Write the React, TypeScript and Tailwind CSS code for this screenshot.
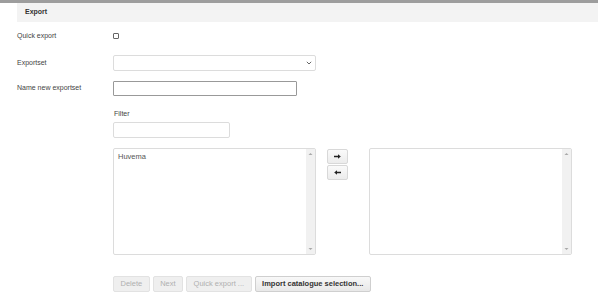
import React from "react";

const font = { fontFamily: '"Liberation Sans", Arial, sans-serif' };

function ScrollArrow({ up }: { up: boolean }) {
  return (
    <svg width="5" height="4" viewBox="0 0 5 4">
      {up ? <path d="M0.5 3 L2.5 1 L4.5 3 Z" fill="#a8a8a8" /> : <path d="M0.5 1 L2.5 3 L4.5 1 Z" fill="#a8a8a8" />}
    </svg>
  );
}

function ListBox({ items }: { items: string[] }) {
  return (
    <div className="flex h-[107px] w-[203px] rounded-[2px] border border-[#dcdcdc] bg-white">
      <div className="flex-1 px-[4px] pt-[3px] text-[7.5px] leading-[9px] text-[#555]">
        {items.map((i) => (
          <div key={i}>{i}</div>
        ))}
      </div>
      <div className="flex w-[9px] flex-col items-center justify-between bg-[#f1f1f1] py-[3px]">
        <ScrollArrow up />
        <ScrollArrow up={false} />
      </div>
    </div>
  );
}

function ArrowBtn({ dir }: { dir: "r" | "l" }) {
  return (
    <div className="flex h-[15px] w-[21px] items-center justify-center rounded-[2px] border border-[#d8d8d8] bg-gradient-to-b from-[#fafafa] to-[#ececec]">
      <svg width="7" height="5" viewBox="0 0 7 5">
        {dir === "r" ? (
          <path d="M0 1.7 H4 V0.2 L6.8 2.5 L4 4.8 V3.3 H0 Z" fill="#222" />
        ) : (
          <path d="M7 1.7 H3 V0.2 L0.2 2.5 L3 4.8 V3.3 H7 Z" fill="#222" />
        )}
      </svg>
    </div>
  );
}

function Btn({ label, disabled }: { label: string; disabled?: boolean }) {
  return (
    <div
      className={
        "flex h-[16px] items-center rounded-[2px] border px-[6.5px] text-[7.5px] " +
        (disabled
          ? "border-[#e2e2e2] bg-[#efefef] text-[#b0b0b0]"
          : "border-[#cfcfcf] bg-gradient-to-b from-[#f8f8f8] to-[#e8e8e8] font-bold text-[#333]")
      }
    >
      {label}
    </div>
  );
}

export default function App() {
  return (
    <div className="relative h-[298px] w-[598px] overflow-hidden bg-white" style={font}>
      <div className="h-[3px] w-full bg-[#9d9d9d]" />
      <div className="ml-[17px] flex h-[19px] items-center bg-[#f3f3f3] pl-[8px] text-[7px] font-bold text-[#333]">
        Export
      </div>
      <div className="text-[7px] text-[#444]">
        <div className="mt-[10px] flex h-[8px] items-center">
          <div className="w-[113px] pl-[17px]">Quick export</div>
          <div className="h-[6px] w-[6px] rounded-[1px] border border-[#666] bg-white" />
        </div>
        <div className="mt-[15px] flex h-[16px] items-center">
          <div className="w-[113px] pl-[17px]">Exportset</div>
          <div className="flex h-[16px] w-[203px] items-center justify-end rounded-[2px] border border-[#dcdcdc] bg-white pr-[3px]">
            <svg width="6" height="4" viewBox="0 0 6 4">
              <path d="M0.8 0.8 L3 3 L5.2 0.8" stroke="#666" strokeWidth="1" fill="none" />
            </svg>
          </div>
        </div>
        <div className="mt-[10px] flex h-[15px] items-center">
          <div className="w-[113px] pl-[17px]">Name new exportset</div>
          <div className="h-[15px] w-[184px] rounded-[1px] border border-[#999] bg-white" />
        </div>
        <div className="ml-[114px] mt-[14px] leading-[8px]">Filter</div>
        <div className="ml-[113px] mt-[4px] h-[16px] w-[117px] rounded-[2px] border border-[#dcdcdc] bg-white" />
        <div className="ml-[113px] mt-[10px] flex">
          <ListBox items={["Huvema"]} />
          <div className="ml-[11px] mt-[1px] flex flex-col gap-[1px]">
            <ArrowBtn dir="r" />
            <ArrowBtn dir="l" />
          </div>
          <div className="ml-[21px]">
            <ListBox items={[]} />
          </div>
        </div>
        <div className="ml-[113px] mt-[21px] flex gap-[3px]">
          <Btn label="Delete" disabled />
          <Btn label="Next" disabled />
          <Btn label="Quick export ..." disabled />
          <Btn label="Import catalogue selection..." />
        </div>
      </div>
    </div>
  );
}
